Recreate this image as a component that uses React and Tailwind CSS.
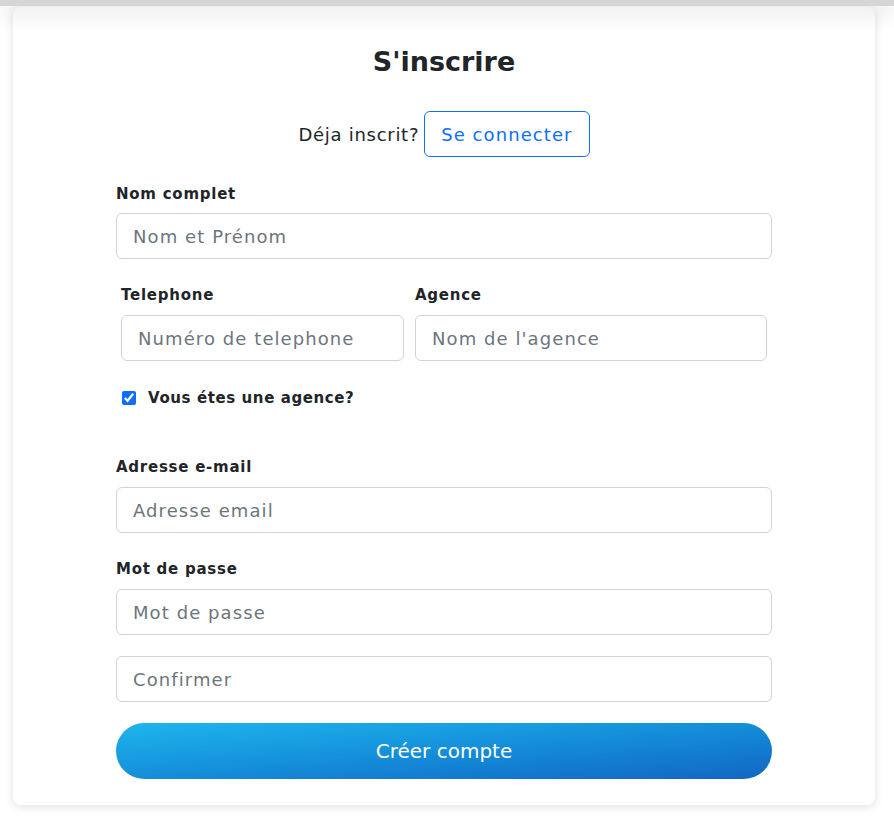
import React from 'react';

const font = { fontFamily: '"DejaVu Sans", Inter, sans-serif' };

const Field = ({ placeholder, className = '' }) => (
  <input
    type="text"
    placeholder={placeholder}
    className={`block w-full h-[46px] rounded-md border border-[#ced4da] bg-white px-4 text-[18px] tracking-[0.06em] text-[#212529] placeholder:text-[#6c757d] outline-none ${className}`}
  />
);

const Label = ({ children, className = '' }) => (
  <label className={`block text-[15px] leading-6 font-bold tracking-[0.05em] text-[#212529] ${className}`}>{children}</label>
);

export default function App() {
  return (
    <div className="min-h-screen bg-white" style={font}>
      <div className="relative z-10 h-[6px] bg-[#d6d6d6] shadow-[0_6px_20px_rgba(0,0,0,0.2)]" />
      <div className="mx-[13px] mt-[1px] w-[862px] h-[798px] rounded-lg bg-white shadow-[0_2px_10px_rgba(0,0,0,0.12)] pt-[37px]">
        <h1 className="text-center text-[27px] leading-[36px] font-bold text-[#212529]">S'inscrire</h1>

        <div className="mt-[31px] flex items-center justify-center gap-[5px]">
          <span className="text-[18px] tracking-[0.04em] text-[#212529]">Déja inscrit?</span>
          <button className="h-[46px] px-4 rounded-md border border-[#0d6efd] text-[18px] tracking-[0.06em] text-[#0d6efd] bg-white">
            Se connecter
          </button>
        </div>

        <form className="mx-auto mt-[25px] w-[656px]" onSubmit={(e) => e.preventDefault()}>
          <Label>Nom complet</Label>
          <Field placeholder="Nom et Prénom" className="mt-[7px]" />

          <div className="mt-[24px] flex gap-[11px] px-[5px]">
            <div className="w-[283px]">
              <Label>Telephone</Label>
              <Field placeholder="Numéro de telephone" className="mt-[8px]" />
            </div>
            <div className="flex-1">
              <Label>Agence</Label>
              <Field placeholder="Nom de l'agence" className="mt-[8px]" />
            </div>
          </div>

          <div className="mt-[25px] ml-[6px] flex items-center gap-[12px]">
            <input type="checkbox" defaultChecked className="w-[14px] h-[14px] accent-[#0d6efd]" />
            <span className="text-[15px] leading-6 font-bold tracking-[0.04em] text-[#212529]">Vous étes une agence?</span>
          </div>

          <Label className="mt-[45px]">Adresse e-mail</Label>
          <Field placeholder="Adresse email" className="mt-[8px]" />

          <Label className="mt-[24px]">Mot de passe</Label>
          <Field placeholder="Mot de passe" className="mt-[8px]" />

          <Field placeholder="Confirmer" className="mt-[21px]" />

          <button
            type="submit"
            className="mt-[21px] w-full h-[56px] rounded-full bg-gradient-to-br from-[#1fb6ee] to-[#1366c4] text-white text-[20px]"
          >
            Créer compte
          </button>
        </form>
      </div>
    </div>
  );
}
